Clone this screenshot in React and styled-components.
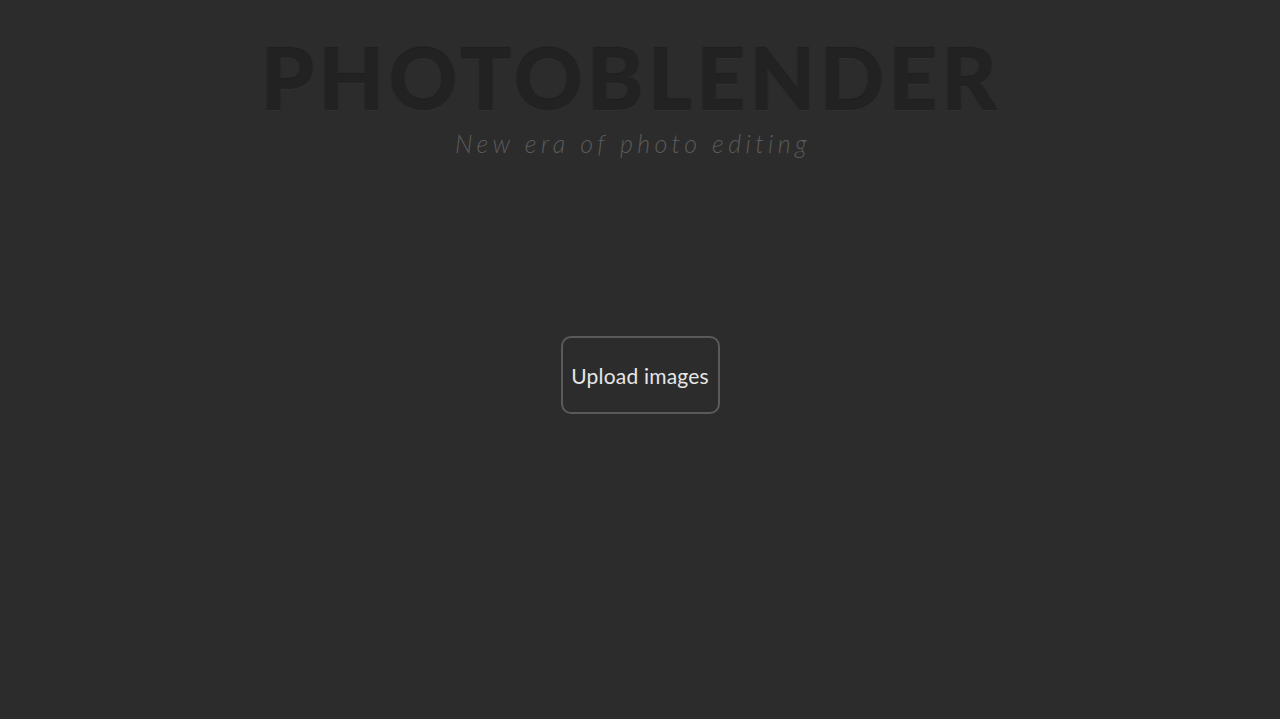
import React from 'react'
import styled, { createGlobalStyle } from 'styled-components'

const GlobalStyle = createGlobalStyle`
  html, body {
    margin: 0;
    padding: 0;
    background: #2c2c2c;
  }
  body {
    font-family: 'Lato', 'DejaVu Sans', sans-serif;
  }
`

const Page = styled.div`
  min-height: 719px;
  display: flex;
  flex-direction: column;
  align-items: center;
`

const Header = styled.header`
  display: flex;
  flex-direction: column;
  align-items: center;
  padding: 34px 14px 0 0;
`

const Title = styled.h1`
  margin: 0;
  padding-right: 4px;
  font-family: 'Lato', 'DejaVu Sans', sans-serif;
  font-weight: 900;
  font-size: 85px;
  line-height: 86px;
  letter-spacing: 4.3px;
  color: #222222;
  text-shadow: 0 1px 1px #313131, 0 -1px 1px #1e1e1e;
`

const Subtitle = styled.p`
  margin: 8px 0 0;
  font-family: 'Lato', 'DejaVu Sans', sans-serif;
  font-style: italic;
  font-weight: 300;
  font-size: 25px;
  line-height: 30px;
  letter-spacing: 4.4px;
  color: #5a5a5a;
`

const Main = styled.main`
  display: flex;
  justify-content: center;
  padding-top: 178px;
`

const UploadButton = styled.button`
  width: 159px;
  height: 78px;
  border: 2px solid #5a5a5a;
  border-radius: 10px;
  background: transparent;
  color: #e6e6e6;
  font-family: 'Lato', 'DejaVu Sans', sans-serif;
  font-size: 21px;
  letter-spacing: 0.2px;
  cursor: pointer;
`

export default function App() {
  return (
    <>
      <GlobalStyle />
      <Page>
        <Header>
          <Title>PHOTOBLENDER</Title>
          <Subtitle>New era of photo editing</Subtitle>
        </Header>
        <Main>
          <UploadButton>Upload images</UploadButton>
        </Main>
      </Page>
    </>
  )
}
